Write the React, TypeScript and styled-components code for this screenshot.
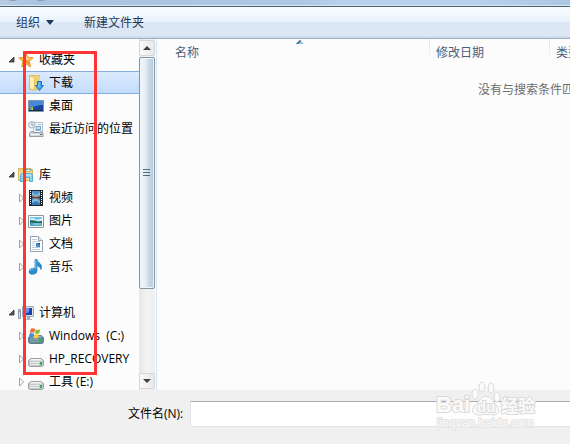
import React, { useState } from "react";
import styled, { createGlobalStyle } from "styled-components";

const GlobalStyle = createGlobalStyle`
  *, *::before, *::after { box-sizing: border-box; }
  html, body { margin: 0; padding: 0; overflow: hidden; }
  body, button, input {
    font-family: "Open Sans", "Noto Sans CJK SC", sans-serif;
    font-size: 12px;
    line-height: 18px;
  }
  button { border: 0; padding: 0; background: none; color: inherit; }
`;

const Dialog = styled.div`
  position: relative;
  display: flex;
  flex-direction: column;
  height: 100vh;
  overflow: hidden;
  background: #f0f0f0;
  color: #000;
`;

const TitleGlass = styled.div`
  flex: none;
  height: 7px;
  overflow: hidden;
  border-bottom: 1px solid #4c5d6c;
  background: linear-gradient(90deg, #b7cce3 0, #a9c4e1 40px, #adc8e4 300px, #b8d3ec 350px, #b7d1ea 480px, #abc7e2 100%);
  box-shadow: inset 0 -1px #d9e8f5;
  svg { display: block; }
`;

const Toolbar = styled.div`
  flex: none;
  display: flex;
  align-items: center;
  gap: 30px;
  height: 32px;
  padding-left: 16px;
  color: #1e395b;
  background: linear-gradient(#fbfdff 0, #e7f2fb 15px, #dce7f5 15px, #dce6f4 29px, #c8d8ec 30px);
  border-bottom: 1px solid #a0afc3;
`;

const ToolButton = styled.button`
  display: flex;
  align-items: center;
  gap: 6px;
`;

const Content = styled.main`
  flex: 1;
  min-height: 0;
  display: flex;
  background: #fcfcfc;
`;

const Navigation = styled.nav`
  flex: none;
  width: 139px;
  padding-top: 9px;
  overflow: hidden;
`;

const Group = styled.div`
  & + & { margin-top: 23px; }
`;

const TreeRow = styled.button<{ $child?: boolean; $selected?: boolean }>`
  display: flex;
  align-items: center;
  width: 100%;
  height: 23px;
  padding-left: ${(p) => (p.$child ? 18 : 8)}px;
  border: solid ${(p) => (p.$selected ? "#84acdd" : "transparent")};
  border-width: 1px 0;
  background: ${(p) => (p.$selected ? "linear-gradient(#dcebfd, #c2dcfd)" : "none")};
  white-space: pre;
  text-align: left;
`;

const ArrowSlot = styled.span`
  flex: none;
  display: flex;
  width: 10px;
`;

const IconSlot = styled.span`
  flex: none;
  display: flex;
  width: 16px;
  margin-right: 5px;
`;

const ScrollTrack = styled.div`
  flex: none;
  display: flex;
  flex-direction: column;
  width: 16px;
  padding: 1px 0;
  background: linear-gradient(90deg, #e7e7e7, #f3f3f3 50%, #eee);
`;

const ScrollButton = styled.button`
  display: grid;
  place-items: center;
  flex: none;
  height: 16px;
  border: 1px solid #d6d6d6;
  border-radius: 2px;
  background: linear-gradient(90deg, #fafafa, #e8e8e8);
`;

const ScrollThumb = styled.div`
  display: grid;
  place-items: center;
  height: 232px;
  margin: 1px 0 auto;
  border: 1px solid #8296a5;
  border-radius: 2px;
  background: linear-gradient(90deg, #f0f7fb 0, #e4eef4 40%, #cbdce6 60%, #b3c8d5 100%);
  box-shadow: inset 0 0 0 1px #edf5fa;
`;

const FilePane = styled.section`
  flex: 1;
  min-width: 0;
  overflow: hidden;
  margin-left: 1px;
  border-left: 1px solid #d6e5f5;
`;

const FileTable = styled.table`
  width: 786px;
  table-layout: fixed;
  border-collapse: collapse;
`;

const ColumnHeader = styled.th<{ $width?: number; $lead?: boolean }>`
  position: relative;
  width: ${(p) => (p.$width ? `${p.$width}px` : "auto")};
  height: 25px;
  padding: 3px 0 0 ${(p) => (p.$lead ? 18 : 6)}px;
  color: #4c607a;
  font-weight: 400;
  text-align: left;
  background: linear-gradient(#d6e2f2, #fcfcfc) right / 1px 100% no-repeat;
`;

const SortMark = styled.svg`
  position: absolute;
  top: 1px;
  left: 51%;
`;

const EmptyCell = styled.td`
  height: 51px;
  padding: 0;
  color: #6d6d6d;
  text-align: center;
`;

const Footer = styled.footer`
  flex: none;
  display: flex;
  align-items: center;
  gap: 7px;
  height: 54px;
  padding: 0 0 6px 128px;
`;

const FileNameInput = styled.input`
  flex: 1;
  min-width: 0;
  height: 26px;
  padding: 0 4px;
  border: 1px solid #e2e3ea;
  border-top-color: #abadb3;
  border-right: 0;
  background: #fff;
  outline: none;
`;

const Highlight = styled.div`
  position: absolute;
  top: 51px;
  left: 23px;
  width: 74px;
  height: 324px;
  border: 3px solid #ff3535;
  pointer-events: none;
`;

const Watermark = styled.svg`
  position: absolute;
  right: 30px;
  bottom: 10px;
  pointer-events: none;
  font-family: "Liberation Sans", "Noto Sans CJK SC", sans-serif;
`;

const icon = { width: 16, height: 16, viewBox: "0 0 16 16", "aria-hidden": true } as const;

const StarIcon = () => (
  <svg {...icon}>
    <path d="M7.8.7 10 5.4l5.2.3-4 3.5 1.5 5.8-4.7-2.9L3.7 15l1-5.6L.7 5.8l5.1-.5z" fill="#ffb93a" stroke="#e08a2c" strokeWidth=".8" />
    <path d="M7.8 2.5 9.2 6l3.8.4-5 1.7-5-1.7 3.3-.4z" fill="#ffe08b" />
    <path d="m8 8 3.2 1.3 1 4-4.1-2.5z" fill="#f5912b" />
  </svg>
);

const DownloadIcon = () => (
  <svg {...icon}>
    <path d="M1.5.5h10v14h-10z" fill="#f2d982" stroke="#d9bd66" />
    <path d="M6 2h6v12H6z" fill="#eed172" />
    <path d="m1.5.5 5 2v13l-5-2z" fill="#fff0b1" stroke="#d6b860" strokeWidth=".8" />
    <path d="M9.5 6.5h4v4h2L11.5 15.4l-4-4.9h2z" fill="#42a5e8" stroke="#1b70b8" />
    <path d="M11 7.5v5" fill="none" stroke="#86d4fa" />
  </svg>
);

const DesktopIcon = () => (
  <svg {...icon}>
    <path d="M.5 2.5h15v11H.5z" fill="#1c4a9f" stroke="#8394a8" />
    <path d="M1 3h14v4Q8 7 1 11z" fill="#4888d4" />
    <path d="M7 12q0-4 8-5v5z" fill="#1a459c" />
    <path d="M1 12h14v1H1z" fill="#14283f" />
    <path d="M2 9h1.5v1.5H2z" fill="#ef6840" /><path d="M3.5 9H5v1.5H3.5z" fill="#85d755" />
    <path d="M2 10.5h1.5V12H2z" fill="#47b7f0" /><path d="M3.5 10.5H5V12H3.5z" fill="#ffda3c" />
  </svg>
);

const RecentIcon = () => (
  <svg {...icon}>
    <path d="M5.5 1.5h9v10h-9z" fill="#f5f8fa" stroke="#b4bfc7" />
    <path d="M10 3.5h3M7 9.5h6" stroke="#9bbdd6" />
    <path d="M8 5.5h4.5v3H8z" fill="#c0e3f8" stroke="#72a5c9" />
    <path d="m1.5 12.5 1.5-2h2v1h8v-1h1l1 2v3H1.5z" fill="#d0d5d9" stroke="#959ea5" />
    <path d="M3 13.5h8" stroke="#f6f8f9" /><path d="M12 13.5h2" stroke="#5d6e76" />
    <circle cx="3.8" cy="3.8" r="3.2" fill="#eff5f9" stroke="#9aabb6" />
    <path d="M3.8 1.7v2.4h2" fill="none" stroke="#637c8d" strokeWidth=".8" />
  </svg>
);

const LibraryIcon = () => (
  <svg {...icon}>
    <path d="M.5 3.5v-2h5l1 1h8v11H.5z" fill="#eed17c" stroke="#d6b865" />
    <path d="M7 1.5h6v3H7z" fill="#eef5dd" stroke="#c8b76f" />
    <path d="M8 2.5h2" stroke="#47a768" /><path d="M11 2.5h2" stroke="#418fd4" />
    <path d="M1 5h13v7.5H1z" fill="#f7e29a" />
    <path d="M2.5 14.5v-6q0-2 2-2h8q2 0 2 2v6h-3v-4h-6v4z" fill="#8bd2f1" stroke="#55abd3" />
    <path d="M4 8h9" stroke="#d5f3ff" />
  </svg>
);

const VideoIcon = () => (
  <svg {...icon}>
    <path d="M1 0h14v16H1z" fill="#20272f" />
    <path d="M4 1h8v6H4z" fill="#4d91ca" /><path d="M4 8h8v7H4z" fill="#367cb5" />
    <path d="m4 2 4 3 4-3v3L8 8 4 6zM4 10l4-2 4 3v2l-4-2-4 2z" fill="#7bbcdf" />
    <path d="m4 5 4 2 3-2-1 4H5z" fill="#ae6753" />
    <path d="M2.5 1v14M13.5 1v14" stroke="#fff" strokeDasharray="1 1" />
    <path d="M4 7.5h8" stroke="#1d3447" strokeWidth=".5" />
  </svg>
);

const PictureIcon = () => (
  <svg {...icon}>
    <path d="M.5 2.5h15v12H.5z" fill="#fff" stroke="#8b969f" />
    <path d="M2 4h12v9H2z" fill="#6ec0ed" />
    <path d="M2 6q3-2 5 0t7-1v3H2z" fill="#d5f0fc" />
    <path d="M2 7q6 0 7 1.5l5-.5v3H2z" fill="#236f61" />
    <path d="M2 10h12v3H2z" fill="#4aa6bd" /><path d="M5 11h8" stroke="#9ddce3" />
  </svg>
);

const DocumentIcon = () => (
  <svg {...icon}>
    <path d="M2.5.5h8l4 4v11h-12z" fill="#fff" stroke="#95a3b1" />
    <path d="M10.5.5v4h4" fill="#e0e9f1" stroke="#95a3b1" />
    <path d="M4 3.5h5M4 5.5h8M4 7.5h3M4 9.5h3M4 11.5h8M4 13.5h8" stroke="#c0ccd6" />
    <path d="M8 7h4v4H8z" fill="#428fd0" /><path d="m9 7 3 2V7z" fill="#244f9b" />
  </svg>
);

const MusicIcon = () => (
  <svg {...icon}>
    <path d="M7 .5h2q0 2 3 4 2.5 2 1 6-.5-3-4-4v5q0 3-3.5 3.7Q1.5 16 1 13q0-3 3-3.5 2-.5 3 .3z" fill="#2690d4" stroke="#1776b6" strokeWidth=".7" />
    <path d="M7.8 1v9M2 12q1-2 3.3-2" fill="none" stroke="#79c9f2" />
  </svg>
);

const ComputerIcon = () => (
  <svg {...icon}>
    <path d="M.5 4.5h2v9h-2z" fill="#d8e2e9" stroke="#899ba8" />
    <path d="M1 6.5h1" stroke="#44b35b" />
    <path d="M4.5 1.5h11v10h-11z" fill="#d8e1e7" stroke="#a1adb5" />
    <path d="M6 3h8v7H6z" fill="#1742b4" /><path d="M6 3h5q2 5-5 6z" fill="#6c91e5" />
    <path d="M9 12h3v2H9z" fill="#9ba9b2" /><path d="M6 14.5h8" stroke="#b1bdc4" />
  </svg>
);

const DriveIcon = ({ system = false }: { system?: boolean }) => (
  <svg {...icon}>
    <path d="M.5 9.5 3 7.5h10l2.5 2v4q0 2-2 2h-11q-2 0-2-2z" fill={system ? "#668995" : "#c5c8ca"} stroke={system ? "#5b7f8c" : "#9b9fa1"} />
    <path d="M1.5 9.5 3.5 8h9l2 1.5z" fill={system ? "#9db8c2" : "#f5f6f6"} />
    <path d="M2 11.5h9M2 13.5h9" stroke={system ? "#80a5b1" : "#eceeee"} />
    <path d="M12 11h2v3h-2z" fill="#25b84a" />
    {system && (
      <>
        <path d="M2.8.8q2-1.2 4.4.2L6.2 4.8Q4 3.7 1.8 5z" fill="#ed6933" />
        <path d="M7.8 1.2q2.3 1.2 4.4.1L11.2 5.4q-2.2 1-4.4-.2z" fill="#84bf3e" />
        <path d="M1.6 5.6q2-1.2 4.4 0L5 9.6Q3 8.5.7 9.6z" fill="#3d8fdb" />
        <path d="M6.6 6q2.2 1 4.4 0L10 10q-2.2 1-4.4-.2z" fill="#ffcd36" />
      </>
    )}
  </svg>
);

const Expanded = () => (
  <svg width="7" height="7" aria-hidden="true"><path d="M6 1v5H1z" fill="#555" stroke="#303030" strokeWidth=".8" /></svg>
);
const Collapsed = () => (
  <svg width="7" height="10" aria-hidden="true"><path d="M1.5 1v8l4-4z" fill="#fff" stroke="#a2a2a2" /></svg>
);

type Entry = { name: string; icon: React.ReactNode; expandable?: boolean };
const groups: { root: Entry; items: Entry[] }[] = [
  {
    root: { name: "收藏夹", icon: <StarIcon /> },
    items: [
      { name: "下载", icon: <DownloadIcon /> },
      { name: "桌面", icon: <DesktopIcon /> },
      { name: "最近访问的位置", icon: <RecentIcon /> },
    ],
  },
  {
    root: { name: "库", icon: <LibraryIcon /> },
    items: [
      { name: "视频", icon: <VideoIcon />, expandable: true },
      { name: "图片", icon: <PictureIcon />, expandable: true },
      { name: "文档", icon: <DocumentIcon />, expandable: true },
      { name: "音乐", icon: <MusicIcon />, expandable: true },
    ],
  },
  {
    root: { name: "计算机", icon: <ComputerIcon /> },
    items: [
      { name: "Windows  (C:)", icon: <DriveIcon system />, expandable: true },
      { name: "HP_RECOVERY", icon: <DriveIcon />, expandable: true },
      { name: "工具 (E:)", icon: <DriveIcon />, expandable: true },
    ],
  },
];

export default function App() {
  const [selected, setSelected] = useState("下载");
  return (
    <>
      <GlobalStyle />
      <Dialog>
        <TitleGlass>
          <svg width="60" height="5" aria-hidden="true">
            <ellipse cx="13" cy="-3" rx="7" ry="4" fill="#8a99ab" />
            <ellipse cx="41" cy="-3" rx="7" ry="4" fill="#8a99ab" />
          </svg>
        </TitleGlass>
        <Toolbar>
          <ToolButton>
            组织
            <svg width="8" height="5" aria-hidden="true"><path d="M0 0h8L4 5z" fill="#1e395b" /></svg>
          </ToolButton>
          <ToolButton>新建文件夹</ToolButton>
        </Toolbar>
        <Content>
          <Navigation>
            {groups.map(({ root, items }) => (
              <Group key={root.name}>
                <TreeRow aria-expanded="true">
                  <ArrowSlot><Expanded /></ArrowSlot>
                  <IconSlot>{root.icon}</IconSlot>
                  {root.name}
                </TreeRow>
                {items.map((item) => (
                  <TreeRow key={item.name} $child $selected={item.name === selected} onClick={() => setSelected(item.name)}>
                    <ArrowSlot>{item.expandable && <Collapsed />}</ArrowSlot>
                    <IconSlot>{item.icon}</IconSlot>
                    {item.name}
                  </TreeRow>
                ))}
              </Group>
            ))}
          </Navigation>
          <ScrollTrack>
            <ScrollButton aria-label="向上滚动">
              <svg width="8" height="4" aria-hidden="true"><path d="M0 4h8L4 0z" fill="#404040" /></svg>
            </ScrollButton>
            <ScrollThumb>
              <svg width="8" height="8" aria-hidden="true"><path d="M0 .5h7M0 3.5h7M0 6.5h7" stroke="#526c7c" /></svg>
            </ScrollThumb>
            <ScrollButton aria-label="向下滚动">
              <svg width="8" height="4" aria-hidden="true"><path d="M0 0h8L4 4z" fill="#404040" /></svg>
            </ScrollButton>
          </ScrollTrack>
          <FilePane>
            <FileTable>
              <thead>
                <tr>
                  <ColumnHeader $width={273} $lead>
                    名称
                    <SortMark width="8" height="4" aria-hidden="true"><path d="M0 4h8L4 0z" fill="#8ec5e0" /><path d="M0 4 4 0l1 1-3 3z" fill="#3c5e72" /></SortMark>
                  </ColumnHeader>
                  <ColumnHeader $width={120}>修改日期</ColumnHeader>
                  <ColumnHeader>类型</ColumnHeader>
                </tr>
              </thead>
              <tbody>
                <tr><EmptyCell colSpan={3}>没有与搜索条件匹配的项。</EmptyCell></tr>
              </tbody>
            </FileTable>
          </FilePane>
        </Content>
        <Footer>
          <label htmlFor="file-name">文件名(N):</label>
          <FileNameInput id="file-name" type="text" />
        </Footer>
        <Highlight />
        <Watermark width="104" height="54" viewBox="0 0 104 54" aria-hidden="true">
          <g fill="#fafafa" stroke="#dadada">
            <text x="0" y="32" fontSize="22" fontWeight="700" paintOrder="stroke" strokeWidth="2">Bai</text>
            <text x="65" y="32" fontSize="17" fontWeight="700" paintOrder="stroke" strokeWidth="2">经验</text>
            <ellipse cx="39" cy="14" rx="3" ry="5" />
            <ellipse cx="46" cy="7" rx="3" ry="5" />
            <ellipse cx="55" cy="8" rx="3" ry="5" />
            <ellipse cx="61" cy="17" rx="3" ry="5" />
            <path d="M50 16q4 0 7 5 4 4 5 7 2 6-4 7-8-1-16 0-7-1-5-7 2-3 6-7 3-5 7-5z" />
            <text x="41" y="32" fontSize="15" fontWeight="700" paintOrder="stroke" strokeWidth="2">du</text>
            <text x="1" y="47" fontSize="12" paintOrder="stroke" strokeWidth="2" stroke="#e4e4e4">jingyan.baidu.com</text>
          </g>
        </Watermark>
      </Dialog>
    </>
  );
}
